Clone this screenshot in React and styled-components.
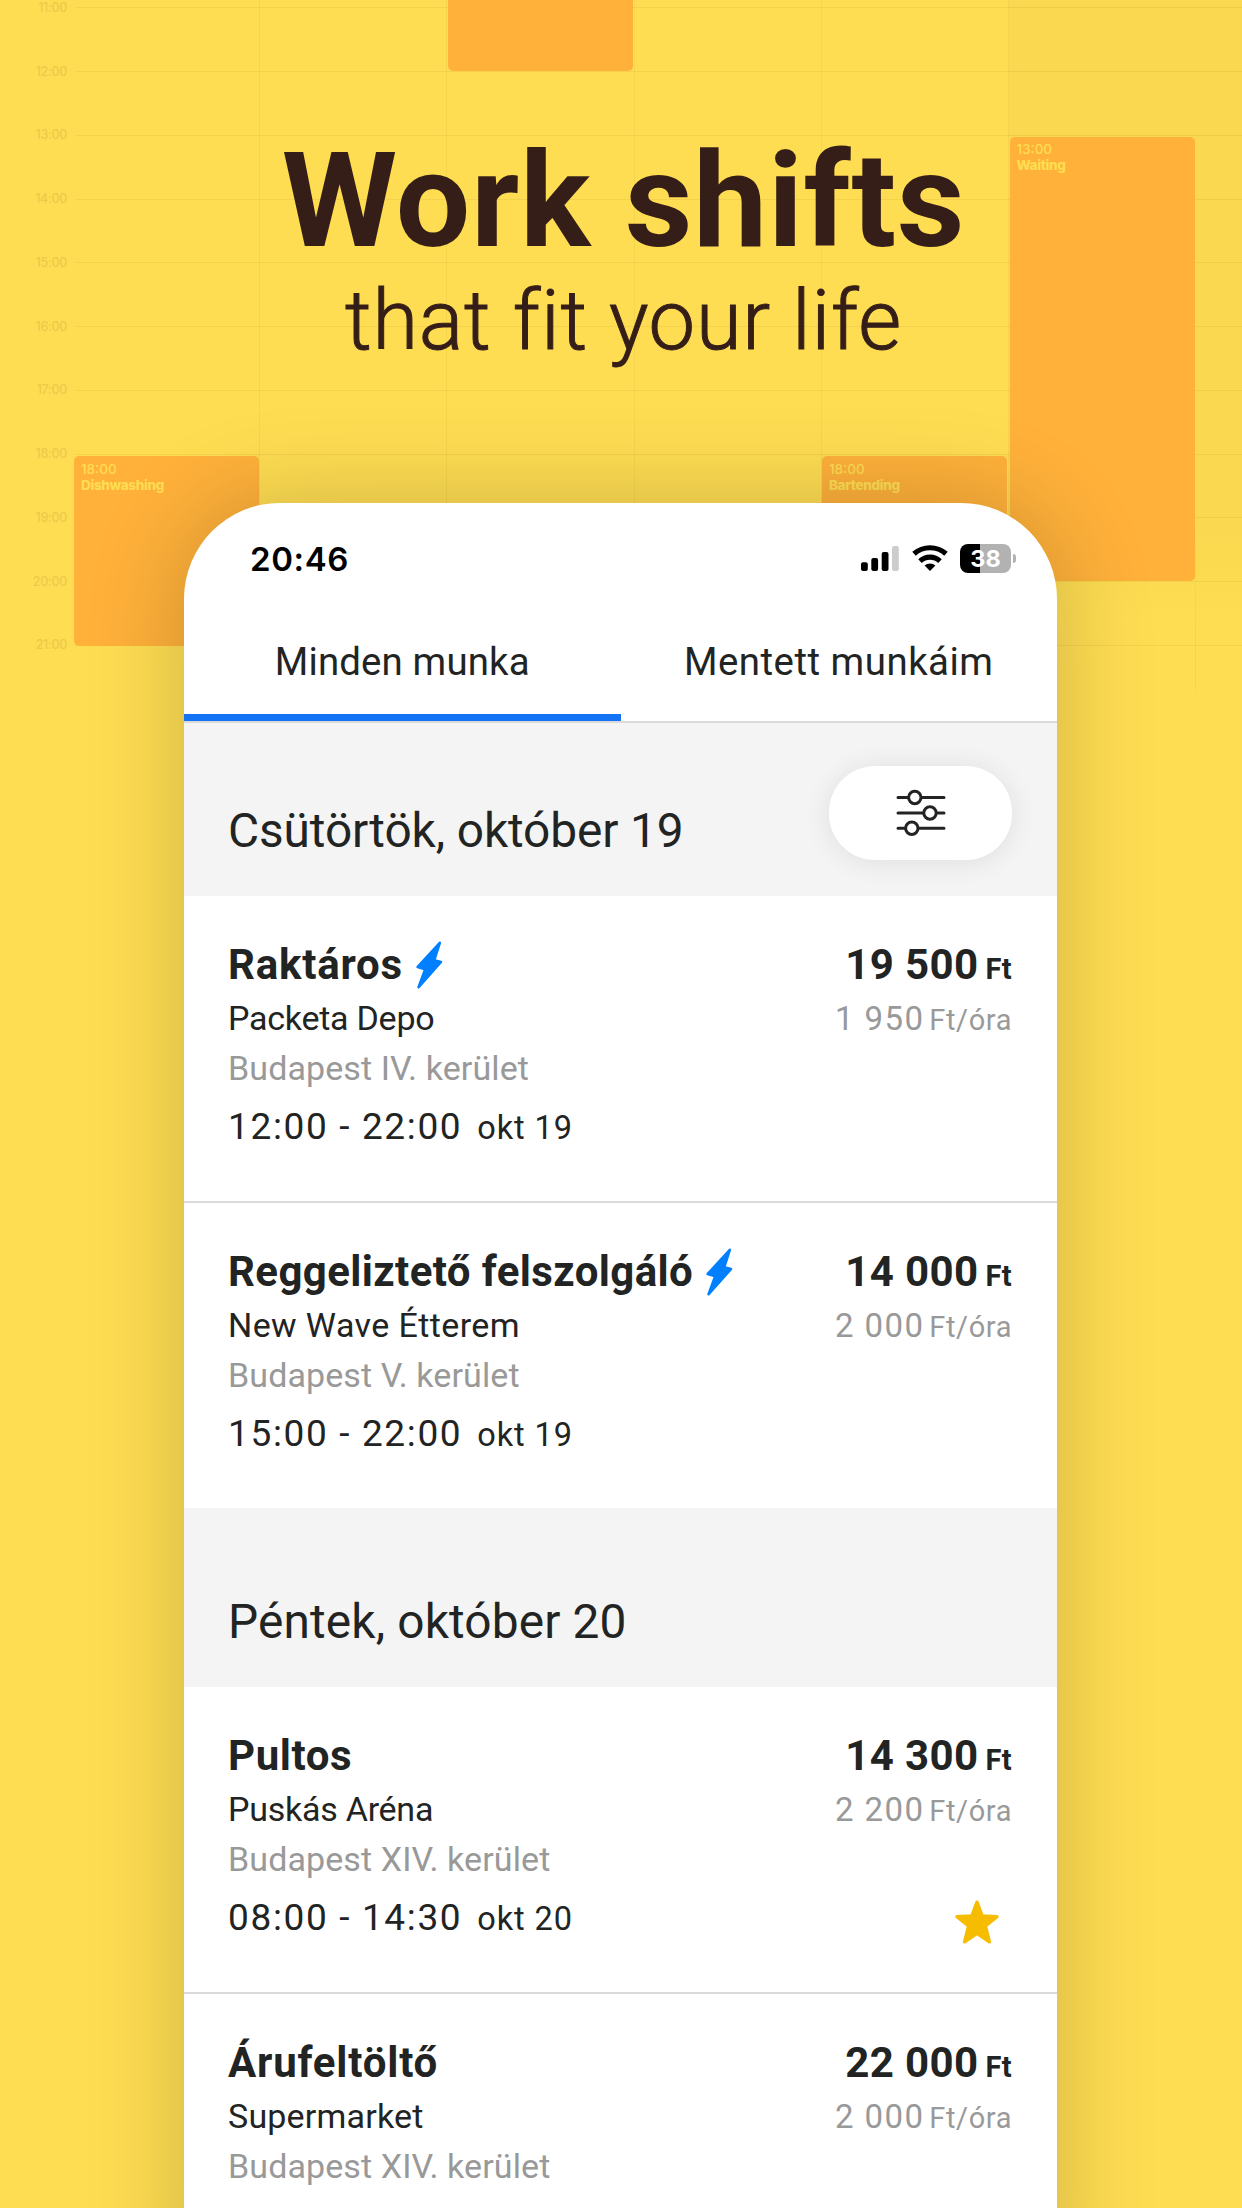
import React from "react";
import styled, { createGlobalStyle } from "styled-components";

const GlobalStyle = createGlobalStyle`
  * {
    box-sizing: border-box;
  }
  body {
    margin: 0;
    font-family: Roboto, "Open Sans", sans-serif;
    color: #222423;
  }
`;

const Page = styled.div`
  position: relative;
  width: 1242px;
  height: 2208px;
  overflow: hidden;
  background-color: #ffdd52;
`;

// calendar behind the phone
const Calendar = styled.div`
  position: absolute;
  top: 0;
  left: 0;
  width: 1242px;
  height: 700px;
  font-family: Inter, sans-serif;
`;

const Days = styled.div`
  display: flex;
  height: 690px;
  padding-left: 73px;
`;

const Day = styled.div`
  width: 187.2px;
  border-right: 1px solid rgba(120, 100, 30, 0.07);
`;

const Weekend = styled.div`
  position: absolute;
  top: 0;
  right: 0;
  width: 233px;
  height: 620px;
  background: linear-gradient(#fad84f 84%, rgba(250, 216, 79, 0));
`;

const Hours = styled.div`
  position: absolute;
  top: -24px;
  left: 0;
  width: 100%;
`;

const Hour = styled.div`
  display: flex;
  align-items: center;
  height: 63.75px;
  gap: 8px;
`;

const HourLabel = styled.span`
  width: 67px;
  text-align: right;
  font-size: 12.5px;
  line-height: 16px;
  font-weight: 500;
  letter-spacing: -0.3px;
  color: #edca4a;
`;

const HourLine = styled.div`
  flex: 1;
  height: 1px;
  background-color: rgba(120, 100, 30, 0.09);
`;

const Event = styled.div`
  position: absolute;
  left: ${(props) => props.$left}px;
  top: ${(props) => props.$top}px;
  width: 185px;
  height: ${(props) => props.$height}px;
  padding: 4.5px 7px;
  border-radius: 5px;
  background-color: #ffb13a;
  color: #ffdd52;
  font-size: 13.5px;
  line-height: 16px;
  font-weight: 500;
`;

const EventName = styled.div`
  font-weight: 800;
  letter-spacing: -0.35px;
`;

const Hero = styled.header`
  position: relative;
  height: 503px;
  padding: 131px 0 0 5px;
  text-align: center;
  color: #351e18;
`;

const HeroTitle = styled.h1`
  margin: 0;
  font-size: 132px;
  line-height: 140px;
  font-weight: 700;
  letter-spacing: 0.7px;
`;

const HeroText = styled.p`
  margin: 0;
  font-size: 83px;
  line-height: 100px;
  font-weight: 300;
  letter-spacing: 0.8px;
  -webkit-text-stroke: 1px #351e18;
`;

const Phone = styled.main`
  position: relative;
  width: 873px;
  height: 1800px;
  margin-left: 184px;
  border-radius: 96px 96px 0 0;
  background-color: #ffffff;
  box-shadow: 0 0 100px rgba(0, 0, 0, 0.2);
`;

const StatusBar = styled.div`
  display: flex;
  justify-content: space-between;
  height: 100px;
  padding: 36px 41px 0 66px;
`;

const Clock = styled.span`
  font-family: Inter, sans-serif;
  font-size: 33px;
  line-height: 40px;
  font-weight: 600;
  letter-spacing: 0.6px;
  color: #000000;
`;

const StatusIcons = styled.div`
  display: flex;
  align-items: flex-start;
  gap: 12.5px;
  padding-top: 5px;
`;

const Battery = styled.div`
  display: flex;
  align-items: center;
  gap: 2px;
`;

const BatteryBody = styled.div`
  width: 51px;
  height: 29px;
  border-radius: 8px;
  background: linear-gradient(90deg, #000000 20px, #b2b2b2 20px);
  color: #ffffff;
  font-family: Inter, sans-serif;
  font-size: 23.5px;
  line-height: 29px;
  font-weight: 700;
  text-align: center;
`;

const BatteryCap = styled.div`
  width: 3px;
  height: 9px;
  border-radius: 0 4px 4px 0;
  background-color: #b2b2b2;
`;

const Tabs = styled.nav`
  display: flex;
  height: 120px;
  border-bottom: 2px solid #dadada;
`;

const Tab = styled.div`
  flex: 1;
  padding-top: 35px;
  text-align: center;
  font-size: 38.4px;
  line-height: 48px;
  letter-spacing: ${(props) => props.$track}px;
  border-bottom: 7px solid ${(props) => (props.$active ? "#1473f5" : "transparent")};
`;

const DayHeader = styled.div`
  display: flex;
  justify-content: space-between;
  align-items: flex-end;
  height: ${(props) => props.$height}px;
  padding: 0 45px 35px 44px;
  background-color: #f4f4f4;
`;

const DayTitle = styled.h2`
  margin: 0;
  font-size: 47.8px;
  line-height: 60px;
  font-weight: 400;
  letter-spacing: ${(props) => props.$track}px;
`;

const FilterButton = styled.div`
  display: flex;
  align-items: center;
  justify-content: center;
  width: 183px;
  height: 94.5px;
  margin-bottom: 1px;
  border-radius: 46px;
  background-color: #ffffff;
  box-shadow: 0 2px 28px rgba(0, 0, 0, 0.09);
`;

const Card = styled.article`
  display: flex;
  justify-content: space-between;
  height: ${(props) => (props.$divider ? 307 : 305)}px;
  padding: 44px 45px 0 44px;
  border-bottom: ${(props) => (props.$divider ? "2px solid #dadada" : "none")};
`;

const Info = styled.div`
  display: flex;
  flex-direction: column;
`;

const JobTitle = styled.div`
  display: flex;
  align-items: center;
  gap: 13px;
  font-size: 42px;
  line-height: 50px;
  font-weight: 700;
  letter-spacing: ${(props) => props.$track}px;
`;

const Company = styled.div`
  margin-top: 8px;
  font-size: 34px;
  line-height: 40px;
  letter-spacing: ${(props) => props.$track}px;
`;

const Location = styled.div`
  margin-top: 10px;
  font-size: 34px;
  line-height: 40px;
  letter-spacing: 0.1px;
  color: #999999;
`;

const Time = styled.div`
  display: flex;
  align-items: baseline;
  gap: 15px;
  margin-top: 17px;
  font-size: 37px;
  line-height: 44px;
  letter-spacing: 1.65px;
`;

const TimeDate = styled.span`
  font-size: 32.5px;
  line-height: 1;
  letter-spacing: 0.9px;
`;

const Pay = styled.div`
  display: flex;
  flex-direction: column;
  align-items: flex-end;
`;

const Amount = styled.div`
  display: flex;
  align-items: baseline;
  gap: 7px;
  font-size: 42px;
  line-height: 50px;
  font-weight: 700;
  letter-spacing: 0.4px;
`;

const AmountUnit = styled.span`
  font-size: 29px;
  line-height: 1;
`;

const Rate = styled.div`
  display: flex;
  align-items: baseline;
  gap: 5px;
  margin-top: 9px;
  font-size: 33px;
  line-height: 40px;
  letter-spacing: 1.4px;
  color: #999999;
`;

const RateUnit = styled.span`
  font-size: 29px;
  line-height: 1;
  letter-spacing: 0.6px;
`;

const Favourite = styled.div`
  margin: 70px 13.5px 0 0;
`;

const Bolt = () => (
  <svg width="27" height="48" viewBox="0 0 27 48">
    <path
      d="M23.8 1.8 L18.2 19.3 L25 21 L2.6 46.2 L9.2 28.3 L1.7 26 Z"
      fill="#0080ff"
      stroke="#0080ff"
      strokeWidth="2.6"
      strokeLinejoin="round"
    />
  </svg>
);

const Star = () => (
  <svg width="44" height="44" viewBox="0 0 44 44" display="block">
    <path
      d="M22 2.2 L27.2 16 L42 16.7 L30.4 26 L34.4 41.8 L22 33.4 L9.6 41.8 L13.6 26 L2 16.7 L16.8 16 Z"
      fill="#f5bc00"
      stroke="#f5bc00"
      strokeWidth="3.4"
      strokeLinejoin="round"
    />
  </svg>
);

const Sliders = () => (
  <svg width="50" height="48" viewBox="0 0 50 48" stroke="#222423" strokeWidth="3" strokeLinecap="round">
    <path d="M2 8.5h46M2 24h46M2 39.3h46" />
    <circle cx="18.8" cy="8.5" r="6.2" fill="#ffffff" />
    <circle cx="34" cy="24" r="6.2" fill="#ffffff" />
    <circle cx="15.8" cy="39.3" r="6.2" fill="#ffffff" />
  </svg>
);

const Signal = () => (
  <svg width="38" height="29" viewBox="0 0 38 29">
    <rect x="0" y="18.3" width="6.8" height="8.7" rx="2" />
    <rect x="10.3" y="14" width="6.8" height="13" rx="2" />
    <rect x="20.7" y="8" width="6.8" height="19" rx="2" />
    <rect x="31" y="2" width="6.8" height="25" rx="2" fill="#cccccc" />
  </svg>
);

const Wifi = () => (
  <svg width="36" height="29" viewBox="0 0 36 29">
    <g fill="none" stroke="#000000" strokeWidth="5.2">
      <path d="M2 9.8A24.2 24.2 0 0 1 34 9.8" />
      <path d="M8 17.1A14.6 14.6 0 0 1 28 17.1" />
    </g>
    <path d="M18 27L12.6 21.6A8 8 0 0 1 23.4 21.6Z" />
  </svg>
);

const hours = [11, 12, 13, 14, 15, 16, 17, 18, 19, 20, 21];

const events = [
  { left: 447.5, top: -60, height: 131 },
  { left: 1009.5, top: 136.5, height: 444.5, time: "13:00", name: "Waiting" },
  { left: 74, top: 456, height: 189.5, time: "18:00", name: "Dishwashing" },
  { left: 822, top: 456, height: 189.5, time: "18:00", name: "Bartending" },
];

const days = [
  {
    title: "Csütörtök, október 19",
    track: -0.1,
    height: 173,
    filter: true,
    jobs: [
      {
        title: "Raktáros",
        titleTrack: 0.8,
        bolt: true,
        company: "Packeta Depo",
        companyTrack: -0.25,
        location: "Budapest IV. kerület",
        time: "12:00 - 22:00",
        date: "okt 19",
        amount: "19 500",
        rate: "1 950",
      },
      {
        title: "Reggeliztető felszolgáló",
        titleTrack: 0.4,
        bolt: true,
        company: "New Wave Étterem",
        companyTrack: 0.4,
        location: "Budapest V. kerület",
        time: "15:00 - 22:00",
        date: "okt 19",
        amount: "14 000",
        rate: "2 000",
      },
    ],
  },
  {
    title: "Péntek, október 20",
    track: 0.15,
    height: 179,
    jobs: [
      {
        title: "Pultos",
        titleTrack: 0.6,
        company: "Puskás Aréna",
        companyTrack: -0.25,
        location: "Budapest XIV. kerület",
        time: "08:00 - 14:30",
        date: "okt 20",
        amount: "14 300",
        rate: "2 200",
        star: true,
      },
      {
        title: "Árufeltöltő",
        titleTrack: 0.8,
        company: "Supermarket",
        companyTrack: 0.2,
        location: "Budapest XIV. kerület",
        amount: "22 000",
        rate: "2 000",
      },
    ],
  },
];

function JobCard({ job, divider }) {
  return (
    <Card $divider={divider}>
      <Info>
        <JobTitle $track={job.titleTrack}>
          {job.title}
          {job.bolt && <Bolt />}
        </JobTitle>
        <Company $track={job.companyTrack}>{job.company}</Company>
        <Location>{job.location}</Location>
        {job.time && (
          <Time>
            {job.time}
            <TimeDate>{job.date}</TimeDate>
          </Time>
        )}
      </Info>
      <Pay>
        <Amount>
          {job.amount}
          <AmountUnit>Ft</AmountUnit>
        </Amount>
        <Rate>
          {job.rate}
          <RateUnit>Ft/óra</RateUnit>
        </Rate>
        {job.star && (
          <Favourite>
            <Star />
          </Favourite>
        )}
      </Pay>
    </Card>
  );
}

export default function App() {
  return (
    <Page>
      <GlobalStyle />
      <Calendar>
        <Weekend />
        <Days>
          {[0, 1, 2, 3, 4, 5].map((day) => (
            <Day key={day} />
          ))}
        </Days>
        <Hours>
          {hours.map((hour) => (
            <Hour key={hour}>
              <HourLabel>{`${hour}:00`}</HourLabel>
              <HourLine />
            </Hour>
          ))}
        </Hours>
        {events.map((event) => (
          <Event key={event.left} $left={event.left} $top={event.top} $height={event.height}>
            {event.time}
            <EventName>{event.name}</EventName>
          </Event>
        ))}
      </Calendar>
      <Hero>
        <HeroTitle>Work shifts</HeroTitle>
        <HeroText>that fit your life</HeroText>
      </Hero>
      <Phone>
        <StatusBar>
          <Clock>20:46</Clock>
          <StatusIcons>
            <Signal />
            <Wifi />
            <Battery>
              <BatteryBody>38</BatteryBody>
              <BatteryCap />
            </Battery>
          </StatusIcons>
        </StatusBar>
        <Tabs>
          <Tab $active $track={0.15}>Minden munka</Tab>
          <Tab $track={0.5}>Mentett munkáim</Tab>
        </Tabs>
        {days.map((day) => (
          <section key={day.title}>
            <DayHeader $height={day.height}>
              <DayTitle $track={day.track}>{day.title}</DayTitle>
              {day.filter && (
                <FilterButton>
                  <Sliders />
                </FilterButton>
              )}
            </DayHeader>
            {day.jobs.map((job, i) => (
              <JobCard key={job.title} job={job} divider={i < day.jobs.length - 1} />
            ))}
          </section>
        ))}
      </Phone>
    </Page>
  );
}
